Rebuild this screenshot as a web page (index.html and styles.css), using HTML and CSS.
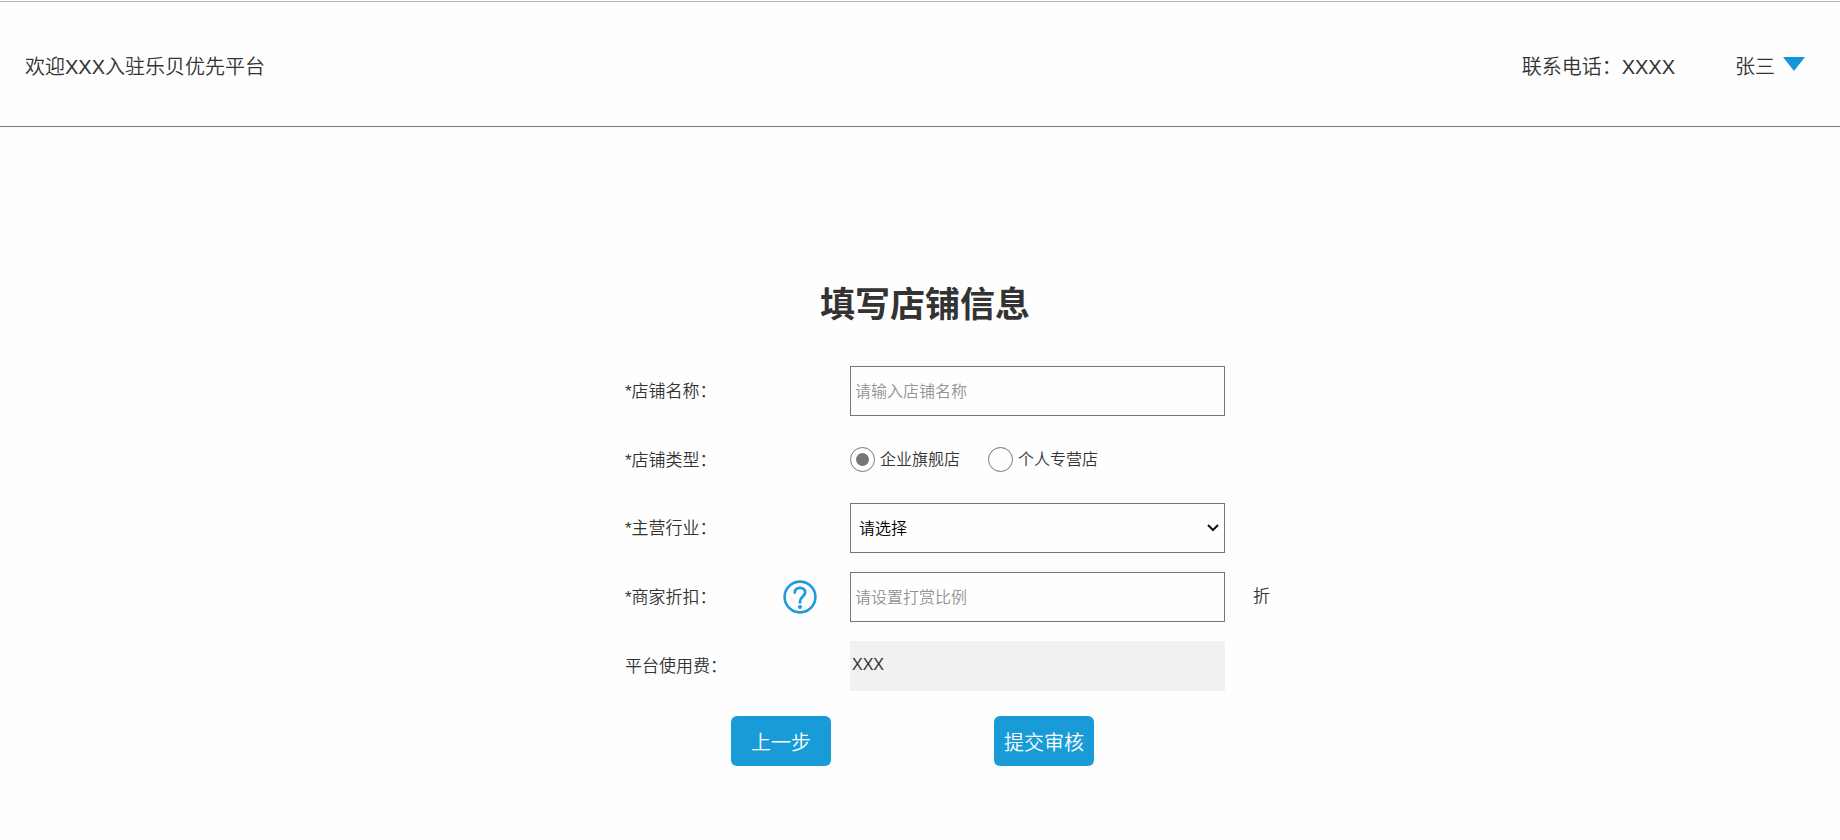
FILE: index.html
```html
<!DOCTYPE html>
<html lang="zh-CN">
<head>
<meta charset="utf-8">
<title>填写店铺信息</title>
<link rel="stylesheet" href="styles.css">
</head>
<body>
<header class="topbar">
  <div class="welcome">欢迎XXX入驻乐贝优先平台</div>
  <div class="account">
    <span>联系电话：XXXX</span>
    <button class="user" type="button">张三
      <svg class="caret" viewBox="0 0 22 14" aria-hidden="true"><path d="M0 0H22L11 14Z" fill="#1296db"/></svg>
    </button>
  </div>
</header>
<main class="page">
  <form class="shop">
    <h1 class="title">填写店铺信息</h1>
    <div class="row">
      <label class="name" for="shop-name">*店铺名称：</label>
      <input class="field" id="shop-name" type="text" placeholder="请输入店铺名称">
    </div>
    <div class="row row-types" role="radiogroup" aria-labelledby="type-label">
      <span class="name" id="type-label">*店铺类型：</span>
      <div class="types">
        <label class="type"><input class="radio" type="radio" name="type" checked>企业旗舰店</label>
        <label class="type"><input class="radio" type="radio" name="type">个人专营店</label>
      </div>
    </div>
    <div class="row">
      <label class="name" for="industry">*主营行业：</label>
      <select class="field select" id="industry"><option>请选择</option></select>
    </div>
    <div class="row">
      <div class="name-help">
        <label class="name" for="discount">*商家折扣：</label>
        <button class="help" type="button" aria-label="帮助">
          <svg class="help-icon" viewBox="0 0 34 34" fill="none" stroke="#1f9ade" aria-hidden="true">
            <circle cx="17" cy="17" r="15.4" stroke-width="2.6"/>
            <path d="M11.8 12.6C11.8 9.6 14 7.8 17 7.8S22.2 9.8 22.2 12.4C22.2 16 17 17 17 21.2V22.4" stroke-width="2.8" stroke-linecap="round"/>
            <circle cx="17" cy="27" r="2" fill="#1f9ade" stroke="none"/>
          </svg>
        </button>
      </div>
      <input class="field" id="discount" type="text" placeholder="请设置打赏比例">
      <span class="unit">折</span>
    </div>
    <div class="row">
      <span class="name">平台使用费：</span>
      <output class="fee">XXX</output>
    </div>
    <div class="actions">
      <button class="btn" type="button">上一步</button>
      <button class="btn" type="submit">提交审核</button>
    </div>
  </form>
</main>
</body>
</html>
```
FILE: styles.css
```css
* {
  box-sizing: border-box;
}

body {
  margin: 0;
  padding-top: 1px;
  background: #fefefe;
  color: #333;
  font-family: "Liberation Sans", "Noto Sans CJK SC", sans-serif;
  font-weight: 350;
}

button,
input,
select {
  font: inherit;
}

.topbar {
  display: flex;
  align-items: center;
  justify-content: space-between;
  min-height: 126px;
  padding: 6px 35px 0 25px;
  border-top: 1px solid #bbb;
  border-bottom: 1px solid #777;
  font-size: 20px;
  line-height: 30px;
}

.account {
  display: flex;
  align-items: center;
  gap: 60px;
}

.user {
  display: flex;
  align-items: center;
  gap: 8px;
  padding: 0;
  border: 0;
  background: none;
  color: inherit;
}

.caret {
  width: 22px;
  height: 14px;
  margin-bottom: 6px;
}

.page {
  display: flex;
  justify-content: center;
  padding: 153px 0 40px 60px;
}

.shop {
  display: flex;
  flex-direction: column;
  gap: 19px;
  width: 650px;
}

.title {
  margin: 0 50px 17px 0;
  font-size: 35px;
  line-height: 50px;
  text-align: center;
}

.row {
  display: grid;
  grid-template-columns: 225px 375px auto;
  align-items: center;
}

.row-types {
  min-height: 49px;
}

.name {
  padding-top: 2px;
  font-size: 17px;
  line-height: 24px;
}

.name-help {
  display: flex;
  align-items: center;
  justify-content: space-between;
  padding-right: 33px;
}

.help {
  display: flex;
  padding: 0;
  border: 0;
  background: none;
}

.help-icon {
  width: 34px;
  height: 34px;
}

.field {
  width: 100%;
  height: 50px;
  padding: 2px 4px 0;
  border: 1px solid #767676;
  border-radius: 0;
  background: #fefefe;
  font-size: 16px;
}

.field::placeholder {
  color: #949494;
}

.select {
  appearance: none;
  padding: 0 24px 0 8px;
  background: #fefefe url("data:image/svg+xml,%3Csvg xmlns='http://www.w3.org/2000/svg' width='12' height='8'%3E%3Cpath d='M1 1L6 6L11 1' fill='none' stroke='%23111' stroke-width='2'/%3E%3C/svg%3E") no-repeat right 5px center;
  color: #000;
}

.types {
  display: flex;
  gap: 28px;
}

.type {
  display: flex;
  align-items: center;
  gap: 5px;
  font-size: 16px;
  line-height: 24px;
}

.radio {
  appearance: none;
  width: 25px;
  height: 25px;
  margin: 0;
  border: 1px solid #767676;
  border-radius: 50%;
}

.radio:checked {
  padding: 5px;
  background: #767676 content-box;
}

.unit {
  padding-left: 28px;
  font-size: 17px;
  line-height: 24px;
}

.fee {
  min-height: 50px;
  padding: 0 2px;
  background: #f1f1f1;
  font-size: 16px;
  line-height: 48px;
}

.actions {
  display: flex;
  gap: 163px;
  padding: 6px 0 0 106px;
}

.btn {
  width: 100px;
  height: 50px;
  padding: 0;
  border: 0;
  border-radius: 6px;
  background: #189bd7;
  color: #fff;
  font-size: 20px;
}
```
